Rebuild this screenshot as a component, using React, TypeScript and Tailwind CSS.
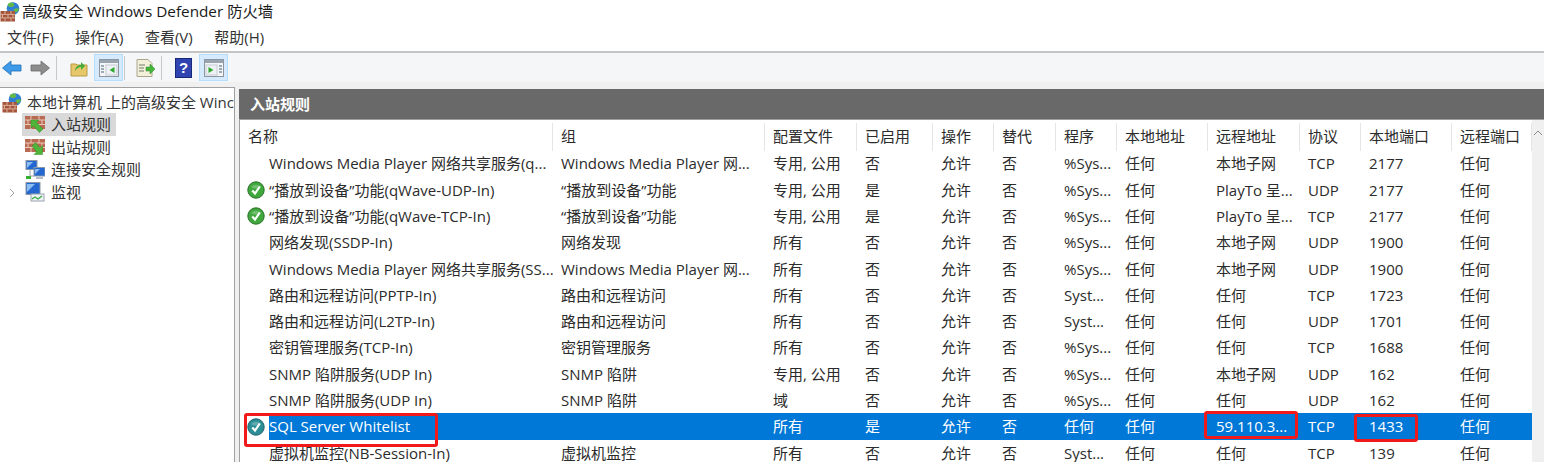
const columns = ["名称", "组", "配置文件", "已启用", "操作", "替代", "程序", "本地地址", "远程地址", "协议", "本地端口", "远程端口"];

type Rule = { enabled?: boolean; selected?: boolean; cells: string[] };

const rules: Rule[] = [
  { cells: ["Windows Media Player 网络共享服务(q...", "Windows Media Player 网...", "专用, 公用", "否", "允许", "否", "%Sys...", "任何", "本地子网", "TCP", "2177", "任何"] },
  { enabled: true, cells: ["“播放到设备”功能(qWave-UDP-In)", "“播放到设备”功能", "专用, 公用", "是", "允许", "否", "%Sys...", "任何", "PlayTo 呈...", "UDP", "2177", "任何"] },
  { enabled: true, cells: ["“播放到设备”功能(qWave-TCP-In)", "“播放到设备”功能", "专用, 公用", "是", "允许", "否", "%Sys...", "任何", "PlayTo 呈...", "TCP", "2177", "任何"] },
  { cells: ["网络发现(SSDP-In)", "网络发现", "所有", "否", "允许", "否", "%Sys...", "任何", "本地子网", "UDP", "1900", "任何"] },
  { cells: ["Windows Media Player 网络共享服务(SS...", "Windows Media Player 网...", "所有", "否", "允许", "否", "%Sys...", "任何", "本地子网", "UDP", "1900", "任何"] },
  { cells: ["路由和远程访问(PPTP-In)", "路由和远程访问", "所有", "否", "允许", "否", "Syst...", "任何", "任何", "TCP", "1723", "任何"] },
  { cells: ["路由和远程访问(L2TP-In)", "路由和远程访问", "所有", "否", "允许", "否", "Syst...", "任何", "任何", "UDP", "1701", "任何"] },
  { cells: ["密钥管理服务(TCP-In)", "密钥管理服务", "所有", "否", "允许", "否", "%Sys...", "任何", "任何", "TCP", "1688", "任何"] },
  { cells: ["SNMP 陷阱服务(UDP In)", "SNMP 陷阱", "专用, 公用", "否", "允许", "否", "%Sys...", "任何", "本地子网", "UDP", "162", "任何"] },
  { cells: ["SNMP 陷阱服务(UDP In)", "SNMP 陷阱", "域", "否", "允许", "否", "%Sys...", "任何", "任何", "UDP", "162", "任何"] },
  { enabled: true, selected: true, cells: ["SQL Server Whitelist", "", "所有", "是", "允许", "否", "任何", "任何", "59.110.3...", "TCP", "1433", "任何"] },
  { cells: ["虚拟机监控(NB-Session-In)", "虚拟机监控", "所有", "否", "允许", "否", "Syst...", "任何", "任何", "TCP", "139", "任何"] },
];

function AppIcon() {
  return (
    <svg viewBox="0 0 20 20" className="w-[20px] h-[20px] shrink-0">
      <circle cx="13" cy="6.5" r="6.3" fill="#2f7fd6" />
      <path d="M8 2c2-2 5-2 6 0s-1 3-3 3-4-1-3-3zM14 7c2-1 5-1 5 0-1 3-3 4-4 3s-2-2-1-3z" fill="#62b84a" />
      <rect x="0.5" y="9" width="14.5" height="10.5" fill="#a4553c" />
      <path d="M0.5 12.4h14.5M0.5 15.9h14.5M5 9v3.4M11 9v3.4M2.5 12.4v3.5M8 12.4v3.5M13 12.4v3.5M5 15.9v3.6M11 15.9v3.6" stroke="#dcae98" strokeWidth="1" fill="none" />
    </svg>
  );
}

function WallArrow({ out }: { out?: boolean }) {
  return (
    <svg viewBox="0 0 20 18" className="w-[20px] h-[18px] shrink-0">
      <rect y="1" width="20" height="13" fill="#b86a52" />
      <path d="M0 5h20M0 9.5h20M6 1v4M14 1v4M3 5v4.5M10 5v4.5M17 5v4.5M6 9.5V14M14 9.5V14" stroke="#ecc8b6" strokeWidth="1" fill="none" />
      {out ? (
        <path d="M7 8l3.5-3.5L15 10l2.5-2.5v9H9l2.5-2.5z" fill="#4fb53a" stroke="#2f8a25" strokeWidth="0.5" />
      ) : (
        <path d="M6 5h8l-2.5 2.5L18 14l-3.5 3.5-6-6.5L6 13z" fill="#4fb53a" stroke="#2f8a25" strokeWidth="0.5" />
      )}
    </svg>
  );
}

function Monitors() {
  return (
    <svg viewBox="0 0 20 20" className="w-[20px] h-[20px] shrink-0">
      <rect x="1" y="0.5" width="11" height="9" fill="#2467d0" stroke="#8a97a8" />
      <path d="M2 2h6l-6 6z" fill="#8cbdf2" />
      <rect x="9" y="7.5" width="11" height="8.5" fill="#2467d0" stroke="#8a97a8" />
      <path d="M10 9h5l-5 5z" fill="#8cbdf2" />
      <path d="M5 10v6h4" stroke="#9aa3ad" fill="none" />
      <rect x="1" y="16" width="5" height="3" fill="#35b035" />
      <rect x="11" y="17" width="7" height="2" fill="#b8bec6" />
    </svg>
  );
}

function Monitor() {
  return (
    <svg viewBox="0 0 20 20" className="w-[20px] h-[20px] shrink-0">
      <rect x="1" y="0.5" width="14" height="12" fill="#2467d0" stroke="#8a97a8" />
      <path d="M2 2h8l-8 8z" fill="#8cbdf2" />
      <rect x="6" y="12" width="13" height="7" fill="#eef3f7" stroke="#9aa3ad" />
      <path d="M7 17l3-2 3 2 4-3" stroke="#39a845" strokeWidth="1.3" fill="none" />
    </svg>
  );
}

function Check({ tinted }: { tinted?: boolean }) {
  return (
    <svg viewBox="0 0 18 18" className="w-[18px] h-[18px]">
      <circle cx="9" cy="9" r="8.2" fill={tinted ? "#2c8f95" : "#3fa83c"} stroke={tinted ? "#1f5f70" : "#2b6f2b"} strokeWidth="1" />
      <path d="M4 6a6 5 0 0 1 10 0c-3 2-7 2-10 0z" fill="#fff" opacity="0.25" />
      <path d="M5.2 9.5l2.8 3 4.8-7" stroke="#fff" strokeWidth="2.2" fill="none" />
    </svg>
  );
}

function PaneIcon({ flip }: { flip?: boolean }) {
  return (
    <svg viewBox="0 0 20 18" className="w-[20px] h-[18px]">
      <rect x="0.5" y="0.5" width="19" height="17" fill="#f5f5f5" stroke="#8c96a0" />
      <rect x="1" y="1" width="18" height="3" fill="#98a4b0" />
      {flip ? (
        <>
          <rect x="2" y="6" width="11" height="10" fill="#eef2f5" stroke="#c4ccd3" />
          <path d="M4.5 8v6l5-3z" fill="#2fa82f" />
          <path d="M15 7h3M15 10h3M15 13h3" stroke="#7f93a6" strokeWidth="1.4" />
        </>
      ) : (
        <>
          <rect x="7" y="6" width="11" height="10" fill="#eef2f5" stroke="#c4ccd3" />
          <path d="M15.5 8v6l-5-3z" fill="#2fa82f" />
          <path d="M2 7h3M2 10h3M2 13h3" stroke="#7f93a6" strokeWidth="1.4" />
        </>
      )}
    </svg>
  );
}

function ToolSep() {
  return <div className="w-px h-[24px] bg-[#c8c8c8]" />;
}

export default function App() {
  return (
    <div className="relative w-[1544px] h-[462px] overflow-hidden bg-[#f0f0f0] text-[15px] text-[#1a1a1a] flex flex-col font-['Open_Sans','Noto_Sans_CJK_SC',sans-serif]">
      <div className="h-[24px] bg-white flex items-center gap-[2px]">
        <AppIcon />
        <span className="text-[15.3px] leading-[20px] pb-[2px]">高级安全 Windows Defender 防火墙</span>
      </div>
      <div className="h-[27px] bg-white flex items-center pl-[7px] gap-[21.5px] border-b-2 border-[#c4c4c4] box-content text-[#333]">
        <span>文件(F)</span>
        <span>操作(A)</span>
        <span>查看(V)</span>
        <span>帮助(H)</span>
      </div>
      <div className="h-[29px] bg-[#f5f6f7] flex items-center">
        <svg viewBox="0 0 20 16" className="w-[20px] h-[16px] ml-[2px]">
          <path d="M0.5 8L9 1v4h10v6H9v4z" fill="#3d9be9" stroke="#1f6fb5" strokeWidth="0.8" />
        </svg>
        <svg viewBox="0 0 20 16" className="w-[20px] h-[16px] ml-[8px]">
          <path d="M19.5 8L11 1v4H1v6h10v4z" fill="#8c8c8c" stroke="#6a6a6a" strokeWidth="0.8" />
        </svg>
        <div className="ml-[6px]"><ToolSep /></div>
        <svg viewBox="0 0 18 18" className="w-[18px] h-[18px] ml-[13px]">
          <path d="M1 5h5l1 1h10v11H1z" fill="#e8c76a" stroke="#b79a45" />
          <path d="M5 12c0-4 3-6 6-6V3l4 4-4 4V8c-2 0-4 1-6 4z" fill="#45ad3c" />
        </svg>
        <div className="w-[29px] h-[27px] ml-[6px] bg-[#d5ebfd] border border-[#b5defc] flex items-center justify-center">
          <PaneIcon />
        </div>
        <div className="ml-[1px]"><ToolSep /></div>
        <svg viewBox="0 0 20 18" className="w-[20px] h-[18px] ml-[11px]">
          <path d="M1 0.5h11l4 4v13H1z" fill="#f3efd8" stroke="#a8a68c" />
          <path d="M3 6h6M3 9h5M3 12h5" stroke="#6f7a6a" />
          <path d="M10 8h4V5l5 5-5 5v-3h-4z" fill="#45b53c" stroke="#2f8a25" strokeWidth="0.5" />
        </svg>
        <div className="ml-[5px]"><ToolSep /></div>
        <svg viewBox="0 0 17 20" className="w-[17px] h-[20px] ml-[13px]">
          <rect x="0.5" y="0.5" width="16" height="19" fill="#2f44b0" stroke="#182878" />
          <text x="8.5" y="15" textAnchor="middle" fontSize="15" fontWeight="700" fill="#fff" fontFamily="Liberation Sans">?</text>
        </svg>
        <div className="w-[29px] h-[27px] ml-[7px] bg-[#d5ebfd] border border-[#b5defc] flex items-center justify-center">
          <PaneIcon flip />
        </div>
      </div>
      <div className="flex-1 flex pt-[5px] min-h-0">
        <div className="w-[235px] bg-white border-t border-r border-[#a0a0a0] overflow-hidden pt-[4px]">
          <div className="flex items-center h-[21px] pl-[2px] gap-[5px] whitespace-nowrap text-[#333]">
            <AppIcon />
            <span>本地计算机 上的高级安全 Winc</span>
          </div>
          <div className="flex flex-col pl-[22px] text-[#333]">
            <div className="flex items-center h-[22.7px] w-[94px] bg-[#d9d9d9] pl-[3px] gap-[6px]">
              <WallArrow />
              <span>入站规则</span>
            </div>
            <div className="flex items-center h-[22.7px] pl-[3px] gap-[6px]">
              <WallArrow out />
              <span>出站规则</span>
            </div>
            <div className="flex items-center h-[22.7px] pl-[3px] gap-[6px]">
              <Monitors />
              <span>连接安全规则</span>
            </div>
            <div className="relative flex items-center h-[22.7px] pl-[3px] gap-[6px]">
              <svg viewBox="0 0 6 10" className="absolute left-[-13px] top-[7px] w-[6px] h-[10px]">
                <path d="M1 1l4 4-4 4" stroke="#a6a6a6" fill="none" />
              </svg>
              <Monitor />
              <span>监视</span>
            </div>
          </div>
        </div>
        <div className="ml-[4px] flex-1 flex flex-col min-w-0">
          <div className="h-[28px] mt-[1.5px] pt-[2px] bg-[#696969] text-white font-bold flex items-center pl-[11px] border-b border-[#9c9c9c] box-content">
            入站规则
          </div>
          <div className="flex-1 mt-[-1px] bg-white border-l border-t border-[#a0a0a0] flex min-h-0 text-[#2b2b2b]">
            <div className="w-[1292px] pt-[3px]">
              <div className="grid grid-cols-[313px_212px_92px_76px_61px_62px_61px_91px_92px_61px_91px_80px] h-[28px]">
                {columns.map((c) => (
                  <div key={c} className="flex items-center pl-[8px] border-r border-[#e5e5e5] whitespace-nowrap">{c}</div>
                ))}
              </div>
              {rules.map((r, i) => (
                <div
                  key={i}
                  className={
                    r.selected
                      ? "grid grid-cols-[313px_212px_92px_76px_61px_62px_61px_91px_92px_61px_91px_80px] h-[26.3px] items-center bg-[#0078d7] text-white"
                      : "grid grid-cols-[313px_212px_92px_76px_61px_62px_61px_91px_92px_61px_91px_80px] h-[26.3px] items-center"
                  }
                >
                  {r.cells.map((c, j) =>
                    j === 0 ? (
                      <div key={j} className="flex items-center h-full whitespace-nowrap overflow-hidden">
                        <div className="w-[29px] h-full shrink-0 bg-white flex items-center pl-[7px]">
                          {r.enabled && <Check tinted={r.selected} />}
                        </div>
                        {c}
                      </div>
                    ) : (
                      <div key={j} className="pl-[8px] whitespace-nowrap overflow-hidden">{c}</div>
                    )
                  )}
                </div>
              ))}
            </div>
            <div className="flex-1 bg-[#f0f0f0] flex justify-center pt-[10px]">
              <svg viewBox="0 0 10 6" className="w-[10px] h-[6px]">
                <path d="M1 5l4-4 4 4" stroke="#8a8a8a" fill="none" />
              </svg>
            </div>
          </div>
        </div>
      </div>
      <div className="absolute left-[244px] top-[413px] w-[194px] h-[34px] border-[3px] border-[#f01a1a] rounded-[3px]" />
      <div className="absolute left-[1204px] top-[411px] w-[94px] h-[28px] border-[3px] border-[#f01a1a] rounded-[3px]" />
      <div className="absolute left-[1354px] top-[414px] w-[64px] h-[28px] border-[3px] border-[#f01a1a] rounded-[3px]" />
    </div>
  );
}
